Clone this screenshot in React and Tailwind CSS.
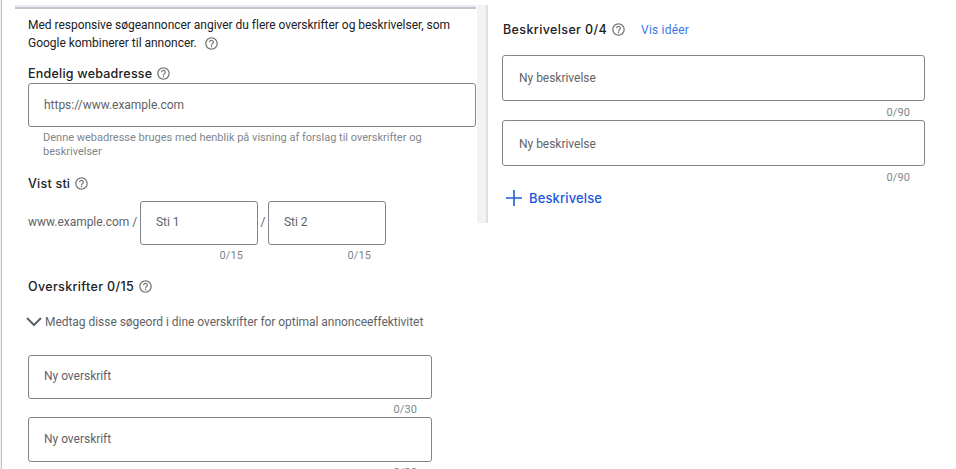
import React from "react";

function HelpIcon({ className = "" }) {
  return (
    <svg
      viewBox="0 0 24 24"
      fill="#757575"
      className={"h-[15px] w-[15px] shrink-0 " + className}>
      <path d="M11 18h2v-2h-2v2zm1-16C6.48 2 2 6.48 2 12s4.480 10 10 10 10-4.480 10-10S17.520 2 12 2zm0 18c-4.410 0-8-3.590-8-8s3.590-8 8-8 8 3.590 8 8-3.590 8-8 8zm0-14c-2.210 0-4 1.790-4 4h2c0-1.100.9-2 2-2s2 .9 2 2c0 2-3 1.750-3 5h2c0-2.250 3-2.500 3-5 0-2.210-1.790-4-4-4z" />
    </svg>
  );
}

function Heading({ children, className = "tracking-[0.22px]" }) {
  return (
    <div className="flex h-4 items-center">
      <h2
        className={
          "font-[Inter,sans-serif] text-[12.5px] leading-4 font-medium whitespace-nowrap text-[#202124] " +
          className
        }>
        {children}
      </h2>
      <HelpIcon className="mb-px ml-1" />
    </div>
  );
}

function Field({ label, className = "pl-[15px]" }) {
  return (
    <div
      className={
        "flex items-center rounded-[3px] border border-[#80868b] text-[12px] whitespace-nowrap text-[#5f6368] " +
        className
      }>
      {label}
    </div>
  );
}

function Counter({ children }) {
  return (
    <div className="pr-[15px] text-right text-[11px] leading-[14px] tracking-[0.1px] text-[#80868b]">
      {children}
    </div>
  );
}

function App() {
  return (
    <main className="flex h-[469px] w-[956px] overflow-hidden bg-white font-[Roboto,sans-serif] text-[12px] tracking-[-0.025px] text-[#5f6368]">
      <div className="h-full w-[2px] shrink-0 border-r border-[#c4c4c4] bg-[#f1f1f1]" />

      {/* left column */}
      <section className="w-[475px] shrink-0 pt-[5px]">
        <div className="ml-[13px] h-[4px] w-[461px] border-b-2 border-[#c3c4c6] bg-[#e8eaf6]" />
        <div className="pl-[26px]">
          <p className="mt-[7px] leading-[18px] whitespace-nowrap text-[#202124]">
            Med responsive søgeannoncer angiver du flere overskrifter og
            beskrivelser, som
          </p>
          <div className="flex h-[18px] items-center text-[#202124]">
            <span className="whitespace-nowrap">
              Google kombinerer til annoncer.
            </span>
            <HelpIcon className="mt-px ml-[7px]" />
          </div>

          <div className="mt-[14px]">
            <Heading>Endelig webadresse</Heading>
          </div>
          <Field
            label="https://www.example.com"
            className="mt-px h-[44px] w-[448px] pl-[15px]"
          />
          <p className="mt-[4px] ml-[15px] text-[11px] leading-[14px] tracking-[0px] whitespace-nowrap text-[#80868b]">
            Denne webadresse bruges med henblik på visning af forslag til
            overskrifter og
            <br />
            beskrivelser
          </p>

          <div className="mt-[17px]">
            <Heading>Vist sti</Heading>
          </div>
          <div className="mt-[9px] flex">
            <span className="w-[112px] leading-[42px] whitespace-nowrap">
              www.example.com /
            </span>
            <div className="w-[118px]">
              <Field
                label="Sti 1"
                className="mb-[4px] h-[44px] pb-[2px] pl-[15px]"
              />
              <Counter>0/15</Counter>
            </div>
            <span className="w-[10px] text-center leading-[42px]">/</span>
            <div className="w-[118px]">
              <Field
                label="Sti 2"
                className="mb-[4px] h-[44px] pb-[2px] pl-[15px]"
              />
              <Counter>0/15</Counter>
            </div>
          </div>

          <div className="mt-[16px]">
            <Heading className="tracking-[0.35px]">Overskrifter 0/15</Heading>
          </div>
          <div className="mt-[19px] flex h-4 items-center">
            <svg
              viewBox="0 0 16 10"
              fill="none"
              stroke="#5f6368"
              strokeWidth="2"
              className="-ml-[2px] h-[10px] w-[16px]">
              <path d="M1 1l7 7 7-7" />
            </svg>
            <span className="ml-[3px] tracking-[-0.04px] whitespace-nowrap">
              Medtag disse søgeord i dine overskrifter for optimal
              annonceeffektivitet
            </span>
          </div>

          <div className="mt-[25px] w-[404px]">
            <Field
              label="Ny overskrift"
              className="mb-[4px] h-[44px] pb-[2px] pl-[15px]"
            />
            <Counter>0/30</Counter>
            <Field
              label="Ny overskrift"
              className="mb-[4px] h-[45px] pb-[2px] pl-[15px]"
            />
            <Counter>0/30</Counter>
          </div>
        </div>
      </section>

      {/* scrollbar strip */}
      <div className="mt-[5px] h-[218px] w-[11px] shrink-0 border-r-2 border-[#dedfe0] bg-[#f1f3f4]" />

      {/* right column */}
      <section className="w-[437px] pt-[22px] pl-[14px]">
        <div className="flex items-center pl-px">
          <Heading className="tracking-[0.38px]">Beskrivelser 0/4</Heading>
          <a className="ml-[15px] leading-4 tracking-[0.2px] text-[#3b78e7]">
            Vis idéer
          </a>
        </div>
        <div className="mt-[17px]">
          <Field
            label="Ny beskrivelse"
            className="mb-[5px] h-[46px] pl-[16px]"
          />
          <Counter>0/90</Counter>
          <Field
            label="Ny beskrivelse"
            className="mb-[5px] h-[46px] pt-px pl-[16px]"
          />
          <Counter>0/90</Counter>
        </div>
        <button className="mt-[6px] ml-[4px] flex h-4 items-center font-[Inter,sans-serif] text-[13px] font-medium tracking-[0.12px] text-[#1a56db]">
          <svg
            viewBox="0 0 16 16"
            fill="none"
            stroke="#1f5fd6"
            strokeWidth="1.600"
            className="mr-[7px] mb-[2px] h-4 w-4">
            <path d="M8 0v16M0 8h16" />
          </svg>
          Beskrivelse
        </button>
      </section>
    </main>
  );
}

export default App;
